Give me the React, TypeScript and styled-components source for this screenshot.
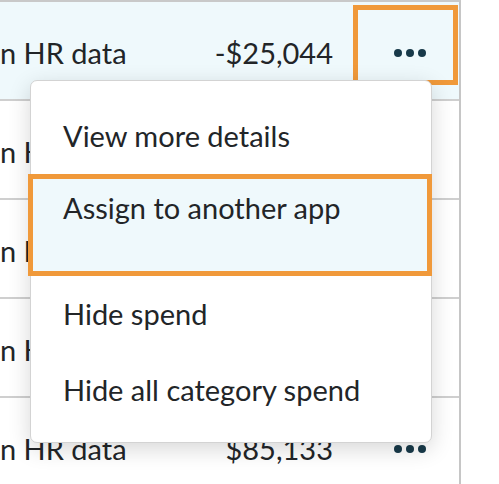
import React from 'react'
import styled, { createGlobalStyle } from 'styled-components'

const GlobalStyle = createGlobalStyle`
  html, body {
    margin: 0;
    padding: 0;
    background: #fff;
  }
  body {
    font-family: Lato, 'Open Sans', sans-serif;
    color: #222528;
  }
`

const Page = styled.div`
  position: relative;
  width: 499px;
  height: 484px;
  overflow: hidden;
`

const Table = styled.div`
  width: 459px;
  border-top: 2px solid #c9c9c9;
  border-right: 2px solid #c6c6c6;
  display: flex;
  flex-direction: column;
`

const Row = styled.div<{ $active?: boolean }>`
  display: flex;
  align-items: center;
  height: 99px;
  border-bottom: 2px solid #cfcfcf;
  background: ${p => (p.$active ? '#eff9fc' : '#fff')};
  font-size: 29px;
  padding-top: 4px;
  box-sizing: border-box;
`

const Name = styled.div`
  flex: 1;
  white-space: nowrap;
  overflow: hidden;
`

const Amount = styled.div`
  width: 200px;
  text-align: right;
  padding-right: 20px;
`

const ActionCell = styled.div`
  width: 106px;
  align-self: stretch;
  margin-top: -4px;
  display: flex;
  align-items: flex-start;
`

const DotsButton = styled.button<{ $outlined?: boolean }>`
  margin-top: 3px;
  width: 105px;
  height: 80px;
  box-sizing: border-box;
  border: 5px solid ${p => (p.$outlined ? '#f0993a' : 'transparent')};
  background: transparent;
  padding: 16px 0 0 8px;
  display: flex;
  align-items: center;
  justify-content: center;
  gap: 4px;
  cursor: pointer;
`

const Dot = styled.span`
  width: 8px;
  height: 8px;
  border-radius: 50%;
  background: #183a4a;
`

const Menu = styled.div`
  position: absolute;
  left: 30px;
  top: 80px;
  width: 402px;
  box-sizing: border-box;
  padding: 17px 0 14px;
  background: #fff;
  border: 1px solid #d3d3d3;
  border-radius: 7px;
  box-shadow: 0 6px 22px rgba(0, 0, 0, 0.16);
  font-size: 29px;
`

const MenuItem = styled.div<{ $highlighted?: boolean }>`
  line-height: 34px;
  white-space: nowrap;
  ${p =>
    p.$highlighted
      ? `
    margin: 0 -1px 0 -3px;
    height: 102px;
    box-sizing: border-box;
    padding: 12px 0 0 30px;
    border: 5px solid #f0993a;
    background: #eff9fc;
  `
      : `
    padding: 21px 0 21px 32px;
  `}
`

const Dots = () => (
  <>
    <Dot />
    <Dot />
    <Dot />
  </>
)

const rows = [
  { id: 1, amount: '-$25,044', active: true },
  { id: 2, amount: '$12,480' },
  { id: 3, amount: '$9,310' },
  { id: 4, amount: '$4,215' },
  { id: 5, amount: '$85,133' }
]

const menuItems = [
  { id: 1, label: 'View more details' },
  { id: 2, label: 'Assign to another app', highlighted: true },
  { id: 3, label: 'Hide spend' },
  { id: 4, label: 'Hide all category spend' }
]

const App = () => {
  return (
    <Page>
      <GlobalStyle />
      <Table>
        {rows.map(r => (
          <Row key={r.id} $active={r.active}>
            <Name>n HR data</Name>
            <Amount>{r.amount}</Amount>
            <ActionCell>
              <DotsButton $outlined={r.active}>
                <Dots />
              </DotsButton>
            </ActionCell>
          </Row>
        ))}
      </Table>
      <Menu>
        {menuItems.map(m => (
          <MenuItem key={m.id} $highlighted={m.highlighted}>
            {m.label}
          </MenuItem>
        ))}
      </Menu>
    </Page>
  )
}

export default App
